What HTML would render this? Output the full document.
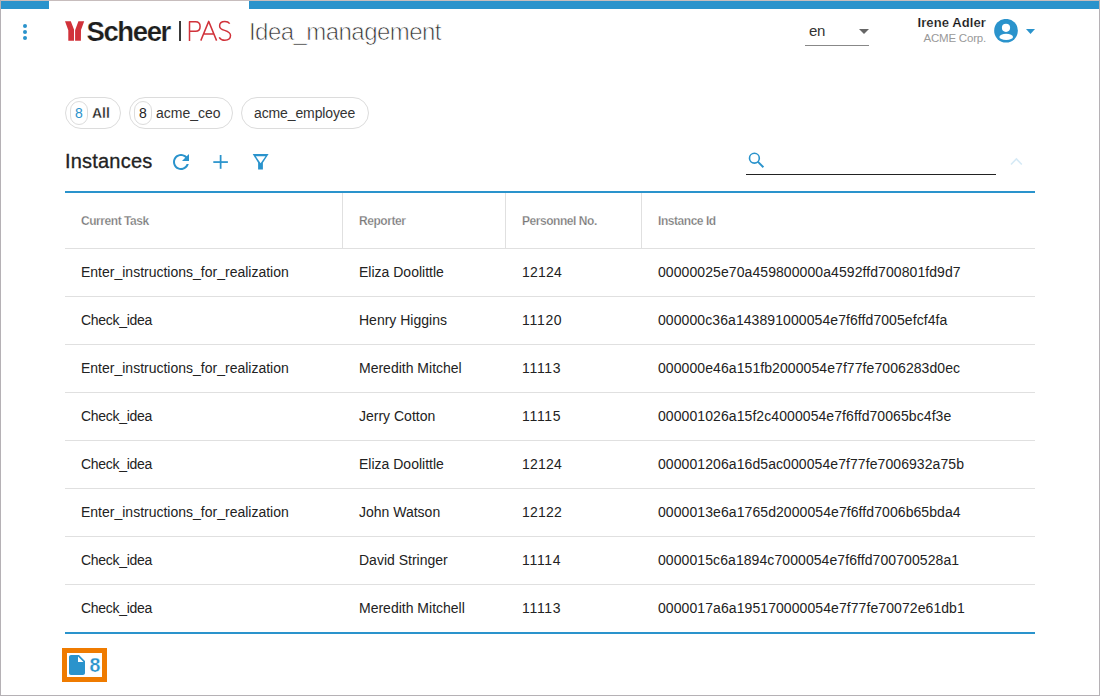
<!DOCTYPE html>
<html><head><meta charset="utf-8">
<style>
html,body{margin:0;padding:0;}
body{width:1100px;height:696px;position:relative;overflow:hidden;background:#fff;font-family:"Liberation Sans",sans-serif;color:#222;}
.a{position:absolute;white-space:nowrap;}
.frame-t{position:absolute;left:0;top:0;width:1100px;height:1px;background:#c7bdbd;}
.frame-l{position:absolute;left:0;top:0;width:1px;height:696px;background:#b5b1b5;}
.frame-r{position:absolute;right:0;top:0;width:1px;height:696px;background:#b5b1b5;}
.frame-b{position:absolute;left:0;bottom:0;width:1100px;height:1px;background:#b5b1b5;}
.bar{position:absolute;top:1px;height:8px;background:#2a93cc;}
.chip{position:absolute;top:97px;height:30px;border:1px solid #dcdcdc;border-radius:16px;box-sizing:content-box;}
.badge{position:absolute;top:3px;height:22px;border:1px solid #dcdcdc;border-radius:11px;font-size:14px;line-height:22px;text-align:center;}
.th{position:absolute;top:193px;height:56px;font-size:12px;font-weight:700;color:#777;letter-spacing:-0.45px;line-height:56px;-webkit-text-stroke:0.25px #fff;}
.id{letter-spacing:0.08px;}
.td{position:absolute;font-size:14px;color:#222;line-height:48px;height:48px;}
.hl{position:absolute;left:65px;width:970px;height:1px;background:#e0e0e0;}
.vl{position:absolute;top:193px;width:1px;height:55px;background:#e0e0e0;}
</style></head>
<body>
<div class="frame-t"></div>
<div class="bar" style="left:1px;width:48px"></div>
<div class="bar" style="left:249px;width:850px"></div>
<div class="frame-l"></div>
<div class="frame-r"></div>
<div class="frame-b"></div>

<!-- kebab -->
<svg class="a" style="left:20px;top:20px" width="10" height="24" viewBox="20 20 10 24">
<circle cx="25" cy="26" r="2" fill="#2a93cc"/><circle cx="25" cy="32" r="2" fill="#2a93cc"/><circle cx="25" cy="38" r="2" fill="#2a93cc"/>
</svg>

<!-- logo -->
<svg class="a" style="left:60px;top:15px" width="40" height="30" viewBox="60 15 40 30">
<polygon fill="#d1323a" points="65,21.2 70.8,21.2 74,29.6 74,40.8 68.3,40.8 68.3,30.3"/>
<polygon fill="#d1323a" points="78.4,21.2 84.2,21.2 81,30 80.9,40.8 75.1,40.8 75.1,30.3"/>
</svg>
<div class="a" style="left:86.5px;top:14.5px;font-size:27.5px;font-weight:700;line-height:34px;color:#1e1e1e;letter-spacing:-1.4px;-webkit-text-stroke:0.2px #fff">Scheer</div>
<div class="a" style="left:179px;top:21px;width:2px;height:20px;background:#3a3a3a"></div>
<svg class="a" style="left:184px;top:16px" width="52" height="30" viewBox="184 16 52 30"><g fill="none" stroke="#d1323a" stroke-width="1.5" stroke-linejoin="round">
<path d="M189.5,40.9 V21.7 H195.6 C198.4,21.7 200.1,23.6 200.1,26.5 C200.1,29.4 198.4,31.3 195.6,31.3 H189.5"/>
<path d="M200.8,40.6 L208.7,21.4 L216.6,40.6 M204.1,34.1 H213.3"/>
<path d="M229.7,23.6 C228.6,22.1 226.9,21.5 224.9,21.5 C221.8,21.5 219.6,23.3 219.6,25.9 C219.6,28.6 221.9,29.6 224.6,30.4 C228.3,31.5 230.5,33 230.5,35.6 C230.5,38.4 228.2,40.3 224.8,40.3 C222.4,40.3 220.4,39.2 219.2,37.3"/>
</g></svg>
<div class="a" style="left:249px;top:16px;font-size:24px;line-height:32px;color:#333;letter-spacing:-0.55px;-webkit-text-stroke:0.7px #fff">Idea_management</div>

<!-- lang select -->
<div class="a" style="left:809px;top:22px;font-size:15px;line-height:18px;color:#333;letter-spacing:-0.4px">en</div>
<svg class="a" style="left:859px;top:29px" width="10" height="5" viewBox="0 0 10 5"><polygon points="0,0 10,0 5,5" fill="#666"/></svg>
<div class="a" style="left:805px;top:45px;width:64px;height:1px;background:#888"></div>

<!-- user -->
<div class="a" style="left:900px;top:15px;width:86px;text-align:right;font-size:13px;font-weight:700;line-height:16px;letter-spacing:0.1px;color:#111;-webkit-text-stroke:0.2px #fff">Irene Adler</div>
<div class="a" style="left:900px;top:31px;width:86px;text-align:right;font-size:11.5px;line-height:14px;letter-spacing:-0.2px;color:#999">ACME Corp.</div>
<svg class="a" style="left:994px;top:19px" width="24" height="24" viewBox="0 0 24 24">
<circle cx="12" cy="11.75" r="11.85" fill="#2a93cc"/>
<circle cx="12" cy="8.85" r="4.1" fill="#fff"/><ellipse cx="12.2" cy="17.9" rx="6.8" ry="3.1" fill="#fff"/>
</svg>
<svg class="a" style="left:1026px;top:29px" width="9" height="5" viewBox="0 0 9 5"><polygon points="0,0 9,0 4.5,5" fill="#2a93cc"/></svg>

<!-- chips -->
<div class="chip" style="left:65px;width:54px">
  <div class="badge" style="left:4px;width:16px;color:#2a93cc">8</div>
  <div class="a" style="left:26px;top:0;font-size:14px;font-weight:700;line-height:30px;color:#222;-webkit-text-stroke:0.3px #fff">All</div>
</div>
<div class="chip" style="left:129px;width:102px">
  <div class="badge" style="left:4px;width:16px;color:#222">8</div>
  <div class="a" style="left:26px;top:0;font-size:14px;line-height:30px;color:#333">acme_ceo</div>
</div>
<div class="chip" style="left:241px;width:126px">
  <div class="a" style="left:12px;top:0;font-size:14px;line-height:30px;color:#333;letter-spacing:-0.12px">acme_employee</div>
</div>

<!-- instances header -->
<div class="a" style="left:65px;top:149px;font-size:20px;line-height:24px;color:#222;letter-spacing:0.2px;-webkit-text-stroke:0.3px #222">Instances</div>

<!-- toolbar icons -->
<svg class="a" style="left:169px;top:150px" width="24" height="24" viewBox="0 0 24 24"><path fill="#2a93cc" d="M17.65 6.35C16.2 4.9 14.21 4 12 4c-4.42 0-7.99 3.58-7.99 8s3.57 8 7.99 8c3.73 0 6.84-2.55 7.73-6h-2.08c-.82 2.33-3.04 4-5.65 4-3.31 0-6-2.69-6-6s2.69-6 6-6c1.66 0 3.14.69 4.22 1.78L13 11h7V4l-2.35 2.35z"/></svg>
<svg class="a" style="left:208px;top:150px" width="24" height="24" viewBox="208 150 24 24"><rect x="213.3" y="161.2" width="14.6" height="1.75" fill="#2a93cc"/><rect x="219.75" y="155" width="1.75" height="13.8" fill="#2a93cc"/></svg>
<svg class="a" style="left:250px;top:150px" width="24" height="24" viewBox="250 150 24 24"><path fill="#2a93cc" fill-rule="evenodd" d="M252.7,154 L268.6,154 L262.9,162.8 L262.9,169.6 L258.1,169.6 L258.1,162.8 Z M255.8,156.2 L265.5,156.2 L260.6,163.2 Z"/></svg>

<!-- search -->
<svg class="a" style="left:745px;top:150px" width="22" height="20" viewBox="745 150 22 20">
<circle cx="754.4" cy="158.2" r="4.9" fill="none" stroke="#2a93cc" stroke-width="1.6"/>
<line x1="757.8" y1="161.6" x2="763.4" y2="167.2" stroke="#2a93cc" stroke-width="2"/>
</svg>
<div class="a" style="left:746px;top:174px;width:250px;height:1px;background:#222"></div>
<svg class="a" style="left:1008px;top:155px" width="16" height="12" viewBox="1008 155 16 12"><polyline points="1011,164.5 1016.4,159 1021.8,164.5" fill="none" stroke="#d6eaf6" stroke-width="1.6"/></svg>

<!-- table -->
<div class="a" style="left:65px;top:191px;width:970px;height:2px;background:#2a93cc"></div>
<div class="vl" style="left:342px"></div>
<div class="vl" style="left:505px"></div>
<div class="vl" style="left:641px"></div>
<div class="th" style="left:81px">Current Task</div>
<div class="th" style="left:359px">Reporter</div>
<div class="th" style="left:522px">Personnel No.</div>
<div class="th" style="left:658px">Instance Id</div>
<div class="hl" style="top:248px"></div>
<div class="td" style="left:81px;top:248px">Enter_instructions_for_realization</div>
<div class="td" style="left:359px;top:248px">Eliza Doolittle</div>
<div class="td" style="left:522px;top:248px;letter-spacing:0.2px">12124</div>
<div class="td id" style="left:658px;top:248px">00000025e70a459800000a4592ffd700801fd9d7</div>
<div class="hl" style="top:296px"></div>
<div class="td" style="left:81px;top:296px;letter-spacing:-0.3px">Check_idea</div>
<div class="td" style="left:359px;top:296px">Henry Higgins</div>
<div class="td" style="left:522px;top:296px;letter-spacing:0.7px">11120</div>
<div class="td id" style="left:658px;top:296px">000000c36a143891000054e7f6ffd7005efcf4fa</div>
<div class="hl" style="top:344px"></div>
<div class="td" style="left:81px;top:344px">Enter_instructions_for_realization</div>
<div class="td" style="left:359px;top:344px">Meredith Mitchel</div>
<div class="td" style="left:522px;top:344px;letter-spacing:0.7px">11113</div>
<div class="td id" style="left:658px;top:344px">000000e46a151fb2000054e7f77fe7006283d0ec</div>
<div class="hl" style="top:392px"></div>
<div class="td" style="left:81px;top:392px;letter-spacing:-0.3px">Check_idea</div>
<div class="td" style="left:359px;top:392px">Jerry Cotton</div>
<div class="td" style="left:522px;top:392px;letter-spacing:0.7px">11115</div>
<div class="td id" style="left:658px;top:392px">000001026a15f2c4000054e7f6ffd70065bc4f3e</div>
<div class="hl" style="top:440px"></div>
<div class="td" style="left:81px;top:440px;letter-spacing:-0.3px">Check_idea</div>
<div class="td" style="left:359px;top:440px">Eliza Doolittle</div>
<div class="td" style="left:522px;top:440px;letter-spacing:0.2px">12124</div>
<div class="td id" style="left:658px;top:440px">000001206a16d5ac000054e7f77fe7006932a75b</div>
<div class="hl" style="top:488px"></div>
<div class="td" style="left:81px;top:488px">Enter_instructions_for_realization</div>
<div class="td" style="left:359px;top:488px">John Watson</div>
<div class="td" style="left:522px;top:488px;letter-spacing:0.2px">12122</div>
<div class="td id" style="left:658px;top:488px">0000013e6a1765d2000054e7f6ffd7006b65bda4</div>
<div class="hl" style="top:536px"></div>
<div class="td" style="left:81px;top:536px;letter-spacing:-0.3px">Check_idea</div>
<div class="td" style="left:359px;top:536px">David Stringer</div>
<div class="td" style="left:522px;top:536px;letter-spacing:0.7px">11114</div>
<div class="td id" style="left:658px;top:536px">0000015c6a1894c7000054e7f6ffd700700528a1</div>
<div class="hl" style="top:584px"></div>
<div class="td" style="left:81px;top:584px;letter-spacing:-0.3px">Check_idea</div>
<div class="td" style="left:359px;top:584px">Meredith Mitchell</div>
<div class="td" style="left:522px;top:584px;letter-spacing:0.7px">11113</div>
<div class="td id" style="left:658px;top:584px">0000017a6a195170000054e7f77fe70072e61db1</div>
<div class="a" style="left:65px;top:632px;width:970px;height:2px;background:#2a93cc"></div>

<!-- footer -->
<div class="a" style="left:62px;top:648px;width:35px;height:24px;border:5px solid #ef7b00;"></div>
<svg class="a" style="left:65px;top:653px" width="24" height="24" viewBox="0 0 24 24"><path fill="#2a93cc" d="M6 2c-1.1 0-1.99.9-1.99 2L4 20c0 1.1.89 2 1.99 2H18c1.1 0 2-.9 2-2V8l-6-6H6zm7 7V3.5L18.5 9H13z"/></svg>
<div class="a" style="left:89.5px;top:652.5px;font-size:19.6px;font-weight:700;line-height:24px;color:#2a93cc;-webkit-text-stroke:0.25px #fff">8</div>

</body></html>
